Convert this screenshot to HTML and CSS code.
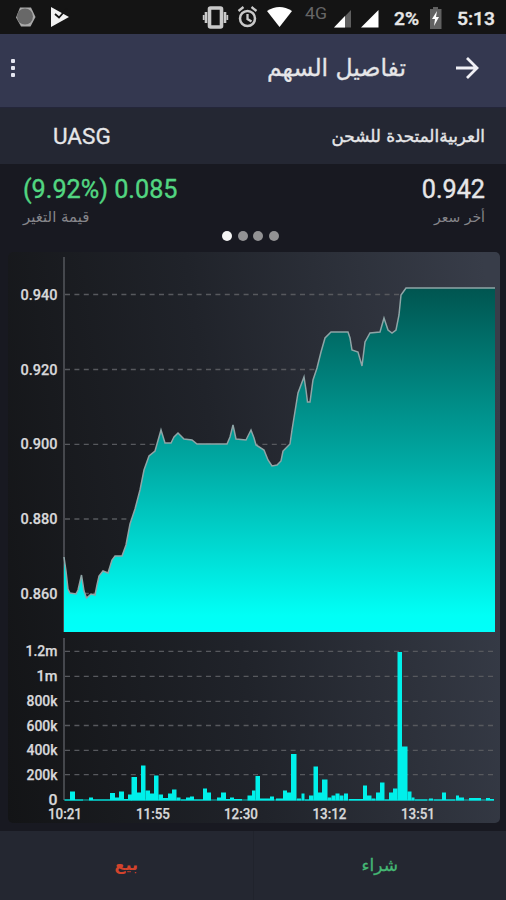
FILE: index.html
```
<!DOCTYPE html>
<html lang="ar" dir="rtl">
<head>
    <meta charset="UTF-8">
    <meta name="viewport" content="width=device-width, initial-scale=1.0">
    <title>تفاصيل السهم</title>
    <link rel="stylesheet" href="styles.css">
</head>
<body>

<div class="status-bar" dir="ltr">
    <svg class="status-icons" width="506" height="34" viewBox="0 0 506 34">
        <path d="M20 7.500h11l4.500 9.500-5 9.500H21l-5-9z" fill="#aaa"/>
        <circle cx="25" cy="16.500" r="8" fill="#686868"/>
        <path d="M51 7l18 10-18 10z" fill="#f2f2f2"/>
        <path d="M55 14l4 3.500 8-9" fill="none" stroke="#141414" stroke-width="1.800"/>
        <g fill="none" stroke="#c9c9c9">
            <rect x="209.500" y="8" width="12" height="19" rx="1" stroke-width="3.600"/>
            <path d="M206 12v11M225 12v11" stroke-width="2.600"/>
            <path d="M203.700 15v5M227.300 15v5" stroke-width="1.800"/>
            <circle cx="247.500" cy="18.500" r="7.500" stroke-width="2.500"/>
            <path d="M247.500 14v5l4 2.500M238.500 11l5-4M256.500 11l-5-4" stroke-width="2.300"/>
        </g>
        <path d="M267 11q12.500-8 25 0L279.500 27z" fill="#fff"/>
        <path d="M351 10v17.500H334z" fill="#5f5f5f"/>
        <path d="M345 16v11.500H334z" fill="#fff"/>
        <path d="M378.500 10v17.500H361z" fill="#fff"/>
        <path d="M430 9h3V7h5v2h3.500v20H430z" fill="#616161"/>
        <path d="M437 11l-5 8h3l-1 7 5-9h-3z" fill="#fff"/>
        <text x="305" y="19" textLength="22" lengthAdjust="spacingAndGlyphs" class="status-net">4G</text>
        <text x="394" y="25" textLength="25" lengthAdjust="spacingAndGlyphs" class="status-text">2%</text>
        <text x="457" y="25" textLength="38" lengthAdjust="spacingAndGlyphs" class="status-text">5:13</text>
    </svg>
</div>

<header class="app-bar">
    <svg class="back" width="24" height="24" viewBox="0 0 24 24">
        <path d="M1 12h20M12 2l10 10-10 10" fill="none" stroke="#f0f0f5" stroke-width="2.800"/>
    </svg>
    <h1 class="title">تفاصيل السهم</h1>
    <div class="menu"><span></span><span></span><span></span></div>
</header>

<div class="stock-bar">
    <div class="stock-name">العربيةالمتحدة للشحن</div>
    <div class="stock-symbol" dir="ltr">UASG</div>
</div>

<div class="summary">
    <div class="last">
        <div class="value" dir="ltr">0.942</div>
        <div class="label">أخر سعر</div>
    </div>
    <div class="change">
        <div class="value up" dir="ltr">(9.92%) 0.085</div>
        <div class="label">قيمة التغير</div>
    </div>
</div>

<div class="dots" dir="ltr">
    <span class="dot active"></span><span class="dot"></span><span class="dot"></span><span class="dot"></span>
</div>

<div class="chart-card" dir="ltr">
    <svg width="492" height="571" viewBox="8 252 492 571">
        <defs>
            <linearGradient id="area" x1="0" y1="288" x2="0" y2="632" gradientUnits="userSpaceOnUse">
                <stop offset="0" stop-color="#005550"/>
                <stop offset="0.500" stop-color="#00a8a2"/>
                <stop offset="0.950" stop-color="#00fff6"/>
                <stop offset="1" stop-color="#00fffa"/>
            </linearGradient>
        </defs>
        <path class="axis" d="M64 257V632M64 638V800"/>
        <g id="grid"></g>
        <g id="price"></g>
        <g id="bars" fill="#00f0ea"></g>
        <g id="labels"></g>
    </svg>
</div>

<footer class="actions">
    <button class="action buy">شراء</button>
    <button class="action sell">بيع</button>
</footer>

<script src="chart.js"></script>
</body>
</html>
```

FILE: chart.js
```
const SVG_NS = 'http://www.w3.org/2000/svg';
const baseline = 800.5;

// [label, y, width]
const yLabels = [
    ['0.940', 294.5, 37],
    ['0.920', 369.5, 37],
    ['0.900', 444.3, 37],
    ['0.880', 519, 37],
    ['0.860', 593.5, 37],
    ['1.2m', 651.3, 32],
    ['1m', 676.3, 21],
    ['800k', 701.3, 31],
    ['600k', 725.5, 31],
    ['400k', 750.3, 31],
    ['200k', 774.7, 31],
    ['0', 799.5, 9],
];

const times = [['10:21', 64.5], ['11:55', 152.5], ['12:30', 240.5], ['13:12', 329], ['13:51', 417.5]];

const pricePath = 'M64 557L66 571L68 589L70 593L76 594L78 590L81.5 575L84 591L86.5 598L91 594L95 595L97 585' +
    'L99 576L103 571L108 573L112 560L115 556L122 556L126 545L130 524L135 509L140 490L144 470L149 456' +
    'L155 451L157 444L161 430L165 443L171 443L174 437L178 433L184 439L192 440L197 444L227 444L230 437' +
    'L233 425L236 439L246 440L251 430L254 438L256 445L264 450L268 460L272 466L277 465L281 461L283 451' +
    'L290 444L292 430L298 393L304 377L306 390L307.5 402L310 402L313 380L317 368L321 352L325 338' +
    'L331 332L348 332L350 338L352 350L358 352L362 366L365 342L370 333L380 332L384 318L388 330' +
    'L392 333L396 330L399 315L401 295L406 288H495';

// [x, width, height]
const volume = [
    [65, 5, 1], [70, 5, 9], [75, 8, 1], [89, 4, 3], [93, 17, 1],
    [110, 5, 7.5], [115, 4, 3], [119, 5, 9], [124, 4, 1.5], [128, 4, 6],
    [131.5, 5.5, 23.5], [137, 4, 8], [141, 4.5, 35], [145.5, 4.5, 10], [150, 4, 7],
    [154, 4.5, 25], [158.5, 4.5, 6], [163, 5, 2.5], [168, 4, 7], [172, 4.5, 11],
    [176.5, 4, 3], [181, 5, 1], [186, 4, 3], [190, 4, 4], [194, 9, 1],
    [203, 4, 12], [207, 4, 8], [217, 4, 3], [221, 5, 8], [226, 4, 1.5],
    [230, 4, 3], [234, 8, 1.5], [247.5, 4.5, 5], [252, 3.5, 10], [255.5, 4.5, 24.5],
    [260, 10, 2], [270, 4, 4], [276, 7, 2], [283, 4, 10], [287, 4, 8],
    [291, 5.5, 46.5], [297, 4, 2], [301.5, 3, 7], [305, 4, 1], [309, 4.5, 5],
    [313.5, 4.5, 34], [318, 4, 8], [322, 5.5, 21], [327.5, 4, 3], [331.5, 4, 5],
    [335.5, 4, 7], [339.5, 4, 5], [344, 4, 7], [349, 14, 1.5], [363, 4, 15],
    [367, 4.5, 5], [371.5, 4, 2], [376, 4, 8], [380, 4.5, 18], [384.5, 4.5, 1],
    [389, 4, 8], [393, 4.5, 12], [397.5, 4.5, 148.5], [402, 5.5, 54], [407.5, 4, 9],
    [411.5, 3, 3], [415, 12, 1], [429, 4, 2], [434, 8, 1], [442, 4, 8],
    [446, 9, 1], [456, 3, 5], [459, 5, 3], [469, 12, 2.5], [486, 4, 2.5], [490, 4, 1.5],
];

function add(parent, tag, attrs, text) {
    const el = document.createElementNS(SVG_NS, tag);
    for (const key in attrs) {
        el.setAttribute(key, attrs[key]);
    }
    if (text) {
        el.textContent = text;
    }
    document.getElementById(parent).appendChild(el);
}

yLabels.forEach(([label, y, width]) => {
    if (label !== '0') {
        add('grid', 'path', { d: `M65 ${y}H493`, class: 'grid-line' });
    }
    add('labels', 'text', { x: 57.5 - width, y: y + 5, textLength: width, lengthAdjust: 'spacingAndGlyphs' }, label);
});

times.forEach(([label, x]) => {
    add('labels', 'text', { x: x - 16.5, y: 819, textLength: 34, lengthAdjust: 'spacingAndGlyphs' }, label);
});

add('price', 'path', { d: pricePath + 'V632H64Z', fill: 'url(#area)' });
add('price', 'path', { d: pricePath, class: 'price-line' });

add('bars', 'rect', { x: 64, y: 799.5, width: 430, height: 1, opacity: 0.75 });
volume.forEach(([x, width, height]) => {
    add('bars', 'rect', { x, y: baseline - height, width, height });
});
```

FILE: styles.css
```
* {
    box-sizing: border-box;
}

body {
    margin: 0;
    height: 900px;
    background-color: #181921;
    color: #e6e6e8;
    font-family: Roboto, "DejaVu Sans", sans-serif;
    display: flex;
    flex-direction: column;
    overflow: hidden;
}

.status-bar {
    height: 34px;
    background-color: #141414;
}

.status-icons {
    display: block;
}

.status-text {
    fill: #e8e8e8;
    font-size: 19px;
    font-weight: 500;
    stroke: #e8e8e8;
    stroke-width: 0.4;
}

.status-net {
    fill: #666;
    font-size: 17px;
}

.app-bar {
    height: 74px;
    padding: 0 27px 5px 11px;
    background-color: #343850;
    border-bottom: 1px solid #24263a;
    display: flex;
    align-items: center;
}

.title {
    margin: 0 49px 0 0;
    font-family: "DejaVu Sans", sans-serif;
    font-size: 23.5px;
    font-weight: normal;
    -webkit-text-stroke: 0.3px #e6e6e8;
}

.menu {
    margin-right: auto;
    display: flex;
    flex-direction: column;
    gap: 3px;
}

.menu span {
    width: 4px;
    height: 4px;
    background-color: #e4e6f0;
    border-radius: 1px;
}

.stock-bar {
    height: 56px;
    padding: 0 21px 0 53px;
    background-color: #242733;
    display: flex;
    justify-content: space-between;
    align-items: center;
}

.stock-name {
    font-family: "DejaVu Sans", sans-serif;
    font-size: 16.8px;
    -webkit-text-stroke: 0.4px #e6e6e8;
}

.stock-symbol {
    font-size: 22.5px;
    -webkit-text-stroke: 0.3px #e6e6e8;
}

.summary {
    height: 66px;
    padding: 12px 21px 0 23px;
    display: flex;
    justify-content: space-between;
}

.value {
    font-size: 25.2px;
    line-height: 28px;
    -webkit-text-stroke: 0.4px currentColor;
}

.up {
    color: #52d681;
}

.label {
    font-family: "DejaVu Sans", sans-serif;
    font-size: 14px;
    line-height: 26px;
    color: #85858a;
}

.change .label {
    font-size: 15px;
    text-align: left;
}

.dots {
    height: 22px;
    padding: 1px 0 0 222px;
    display: flex;
    gap: 5.5px;
}

.dot {
    width: 10px;
    height: 10px;
    border-radius: 50%;
    background-color: #929294;
}

.dot.active {
    background-color: #f4f4f4;
}

.chart-card {
    width: 492px;
    height: 571px;
    margin: 0 6px 8px 8px;
    border-radius: 5px;
    background: linear-gradient(82deg, #131416, #20232a 45%, #383d49 97%);
    overflow: hidden;
}

.chart-card svg {
    display: block;
}

.chart-card text {
    fill: #d8d8da;
    font-size: 14px;
    font-weight: 500;
    stroke: #d8d8da;
    stroke-width: 0.25;
}

.axis {
    stroke: #55575d;
    stroke-width: 1.5;
}

.grid-line {
    stroke: #57595e;
    stroke-width: 1.3;
    stroke-dasharray: 5 4.4;
}

.price-line {
    fill: none;
    stroke: #8fa5a7;
    stroke-width: 1.5;
}

.actions {
    flex: 1;
    background-color: #242731;
    display: flex;
}

.action {
    flex: 1;
    padding: 0 0 2px;
    background: none;
    border: none;
    font-family: "DejaVu Sans", sans-serif;
    font-size: 17px;
}

.buy {
    color: #45b874;
    border-left: 1px solid #20232c;
    -webkit-text-stroke: 0.3px currentColor;
}

.sell {
    color: #d3432c;
    font-size: 16px;
    font-weight: bold;
}
```
